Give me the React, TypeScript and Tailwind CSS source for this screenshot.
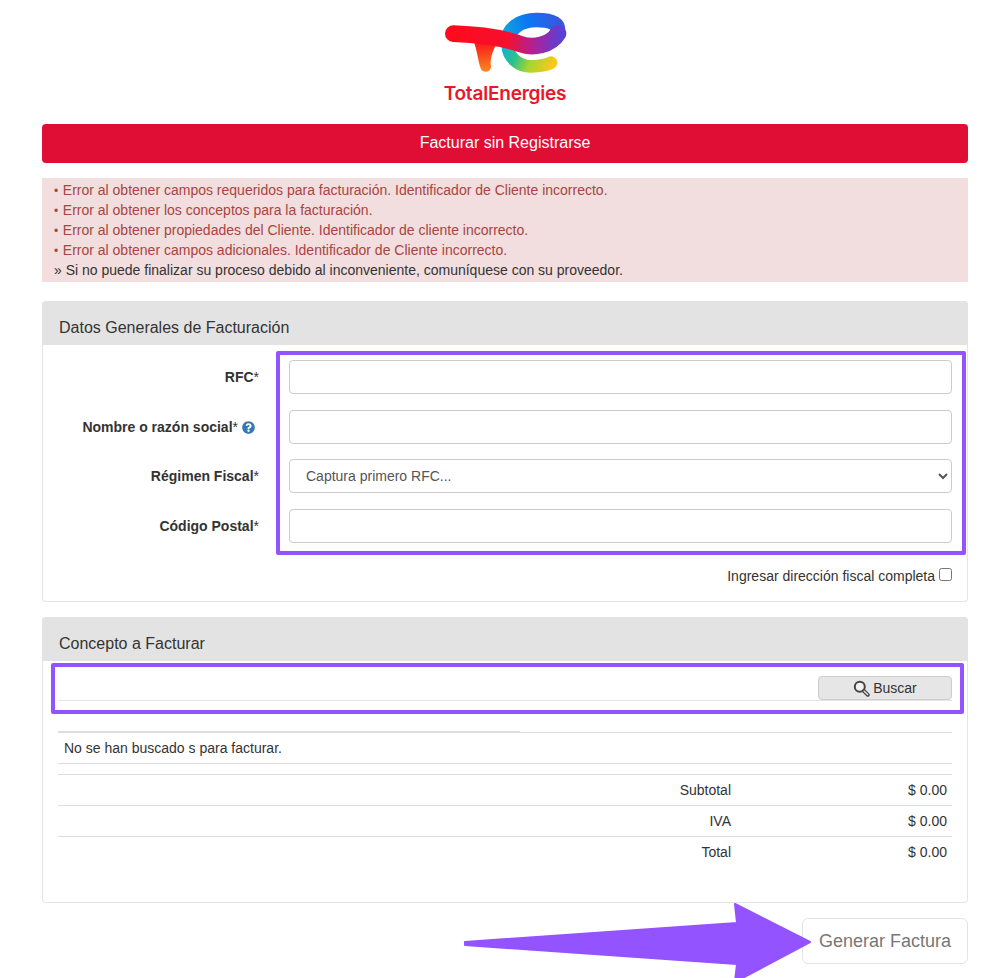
import React from "react";
import { FaQuestionCircle } from "react-icons/fa";

function Logo() {
  return (
    <svg width="170" height="82" viewBox="0 0 510 246" className="block">
      <defs>
        <linearGradient id="lower" gradientUnits="userSpaceOnUse" x1="250" y1="130" x2="400" y2="195">
          <stop offset="0" stopColor="#12b0dc" />
          <stop offset="0.3" stopColor="#2cc08c" />
          <stop offset="0.6" stopColor="#a8d62e" />
          <stop offset="1" stopColor="#fbc71c" />
        </linearGradient>
        <linearGradient id="upper" gradientUnits="userSpaceOnUse" x1="255" y1="130" x2="430" y2="80">
          <stop offset="0" stopColor="#10a8dc" />
          <stop offset="0.45" stopColor="#0a78f2" />
          <stop offset="1" stopColor="#3a55e0" />
        </linearGradient>
        <linearGradient id="bar" gradientUnits="userSpaceOnUse" x1="100" y1="100" x2="425" y2="110">
          <stop offset="0" stopColor="#ff0a1e" />
          <stop offset="0.5" stopColor="#f5102c" />
          <stop offset="0.72" stopColor="#b5208e" />
          <stop offset="1" stopColor="#5a40d8" />
        </linearGradient>
        <linearGradient id="stem" gradientUnits="userSpaceOnUse" x1="190" y1="130" x2="197" y2="215">
          <stop offset="0" stopColor="#fb1a1c" />
          <stop offset="1" stopColor="#f98a1e" />
        </linearGradient>
      </defs>
      <path d="M264 125 C258 175 300 200 335 199 C360 198 380 194 393 188" fill="none" stroke="url(#lower)" strokeWidth="38" strokeLinecap="round" />
      <path d="M262 130 C262 85 300 60 350 60 C392 60 414 70 414 90 C414 115 395 128 350 136" fill="none" stroke="url(#upper)" strokeWidth="44" />
      <path d="M160 122 C172 150 174 185 183 207 C189 221 215 217 213 198 C210 178 215 160 232 125 Z" fill="url(#stem)" />
      <path d="M100 101 C180 104 250 114 300 132 C340 146 392 136 414 100" fill="none" stroke="url(#bar)" strokeWidth="50" strokeLinecap="round" />
    </svg>
  );
}

function Label({ text, help }: { text: string; help?: boolean }) {
  return (
    <div className="w-[216px] shrink-0 flex justify-end items-center text-[14px] text-[#333]">
      <span>
        <b>{text}</b>*
      </span>
      {help ? (
        <span className="ml-[4px] mr-[4px] text-[#337ab7]">
          <FaQuestionCircle size={13} />
        </span>
      ) : null}
    </div>
  );
}

function Row({ text, help, select, className }: { text: string; help?: boolean; select?: boolean; className?: string }) {
  return (
    <div className={"flex items-center gap-[30px] " + (className ?? "")}>
      <Label text={text} help={help} />
      {select ? (
        <select className="flex-1 min-w-0 h-[34px] border border-[#ccc] rounded-[4px] bg-white px-[12px] text-[14px] text-[#555]">
          <option>Captura primero RFC...</option>
        </select>
      ) : (
        <input type="text" className="flex-1 min-w-0 h-[34px] border border-[#ccc] rounded-[4px] bg-white" />
      )}
    </div>
  );
}

function Total({ label }: { label: string }) {
  return (
    <div className="flex h-[31px] items-center border-t border-[#ddd] text-[14px] text-[#333]">
      <div className="flex-1 text-right pr-[6px]">{label}</div>
      <div className="w-[215px] text-right pr-[5px]">$ 0.00</div>
    </div>
  );
}

function Err({ children }: { children: React.ReactNode }) {
  return (
    <div className="h-[20px]">
      <span className="inline-block w-[8.8px] text-[12px] leading-[10px]">•</span>
      {children}
    </div>
  );
}

export default function App() {
  return (
    <div className="relative w-full h-[978px] overflow-hidden bg-white pl-[42px] pr-[24px] font-['Liberation_Sans',Arial,sans-serif]">
      <div className="h-[124px] flex flex-col items-center">
        <Logo />
        <div className="mt-[1px] text-[19px] leading-[22px] font-semibold tracking-[-0.2px] text-[#e8172c] font-['Inter',sans-serif]">TotalEnergies</div>
      </div>

      <div className="h-[39px] rounded-[4px] bg-[#e00d34] text-white text-[16px] flex items-center justify-center pb-[2px]">
        Facturar sin Registrarse
      </div>

      <div className="mt-[15px] h-[104px] bg-[#f2dede] pt-[2px] pl-[12px] text-[14px] leading-[20px] text-[#a94442]">
        <Err>Error al obtener campos requeridos para facturación. Identificador de Cliente incorrecto.</Err>
        <Err>Error al obtener los conceptos para la facturación.</Err>
        <Err>Error al obtener propiedades del Cliente. Identificador de cliente incorrecto.</Err>
        <Err>Error al obtener campos adicionales. Identificador de Cliente incorrecto.</Err>
        <div className="text-[#333]">» Si no puede finalizar su proceso debido al inconveniente, comuníquese con su proveedor.</div>
      </div>

      <section className="relative mt-[19px] h-[301px] rounded-[4px] border border-t-0 border-[#e5e5e5]">
        <div className="-mx-px h-[44px] rounded-t-[4px] bg-[#e3e3e3] pt-[16px] pl-[17px] text-[16px] leading-[22px] text-[#333]">
          Datos Generales de Facturación
        </div>
        <div className="pt-[15px] pr-[15px]">
          <Row text="RFC" />
          <Row text="Nombre o razón social" help className="mt-[16px]" />
          <Row text="Régimen Fiscal" select className="mt-[15px]" />
          <Row text="Código Postal" className="mt-[16px]" />
          <label className="mt-[23px] flex items-center justify-end gap-[4px] text-[14px] leading-[20px] text-[#333]">
            Ingresar dirección fiscal completa
            <input type="checkbox" className="mt-0 mx-0 mb-[3px] w-[13px] h-[13px]" />
          </label>
        </div>
        <div className="absolute left-[233px] top-[50px] w-[690px] h-[204px] border-[4px] border-[#9353ff] rounded-[2px]" />
      </section>

      <section className="relative mt-[15px] h-[286px] rounded-[4px] border border-t-0 border-[#e5e5e5]">
        <div className="-mx-px h-[44px] rounded-t-[4px] bg-[#e3e3e3] pt-[16px] pl-[17px] text-[16px] leading-[22px] text-[#333]">
          Concepto a Facturar
        </div>
        <div className="px-[15px]">
          <div className="mt-[15px] h-[25px] border-b border-[#e5e5e5] flex justify-end">
            <button className="w-[134px] h-[24px] rounded-[4px] border border-[#ccc] bg-[#e6e6e6] flex items-center justify-center gap-[3px] text-[14px] text-[#333]">
              <svg width="17" height="17" viewBox="0 0 17 17">
                <circle cx="6.8" cy="6.8" r="5" fill="#f2f2f2" stroke="#444" strokeWidth="2" />
                <path d="M10.8 10.8 L14.8 14.8" stroke="#444" strokeWidth="3.8" strokeLinecap="round" />
                <path d="M11.2 11.2 L14.6 14.6" stroke="#e4e4e4" strokeWidth="1.4" strokeLinecap="round" />
              </svg>
              Buscar
            </button>
          </div>
          <div className="mt-[31px] relative border-t border-[#ddd]">
            <div className="absolute -top-[2px] left-0 w-[462px] h-[2px] bg-[#ddd]" />
            <div className="h-[31px] pl-[6px] flex items-center border-b border-[#ddd] text-[14px] text-[#333]">
              No se han buscado s para facturar.
            </div>
          </div>
          <div className="mt-[10px]">
            <Total label="Subtotal" />
            <Total label="IVA" />
            <Total label="Total" />
          </div>
        </div>
        <div className="absolute left-[8px] top-[46px] w-[913px] h-[51px] border-[4px] border-[#9353ff] rounded-[2px]" />
      </section>

      <div className="mt-[15px] flex justify-end">
        <button className="w-[166px] h-[46px] rounded-[6px] border border-[#e3e3e3] bg-white text-[18px] text-[#777]">
          Generar Factura
        </button>
      </div>

      <svg className="absolute left-[450px] top-[890px]" width="380" height="100" viewBox="450 890 380 100">
        <path
          d="M465 942 L737 923 L735 904 L810 942 L735 982 L737 964 L465 945 Z"
          fill="#9353ff"
          stroke="#9353ff"
          strokeWidth="2"
          strokeLinejoin="round"
        />
      </svg>
    </div>
  );
}
